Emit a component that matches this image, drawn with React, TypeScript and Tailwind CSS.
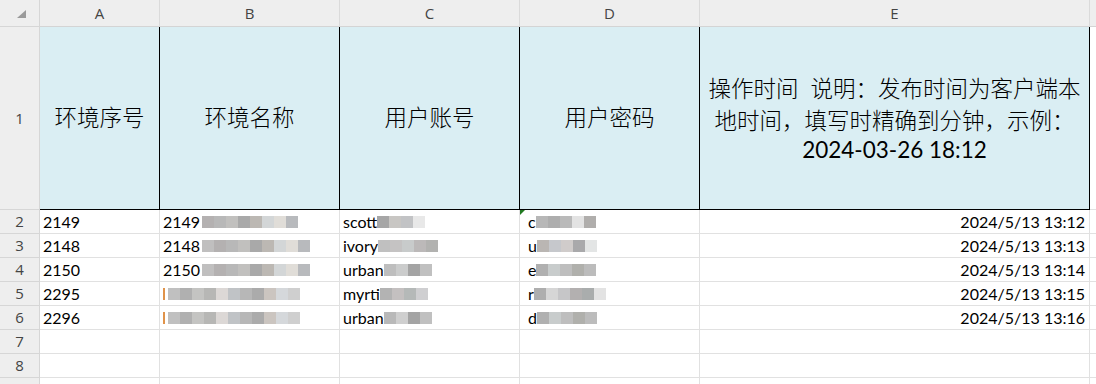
import React from "react"

const cols = ["A", "B", "C", "D", "E", ""]

type Row = {
  a: string
  b: string
  bTiles: string[]
  c: string
  cTiles: string[]
  d: string
  dTiles: string[]
  e: string
}

const tB1 = ["#b4b1b1", "#b8b8b8", "#c1c0be", "#a9a9a9", "#bcb8b3", "#d3d6d7", "#e0ddd8", "#b8babd"]
const tB2 = ["#c0c0c0", "#b0b0b0", "#c4c4c2", "#b7b7b5", "#dcd8d6", "#c0c3c6", "#b7b7b7", "#ababab", "#cbc5c0", "#d5d8db", "#cfcfcf"]

const rows: Row[] = [
  { a: "2149", b: "2149", bTiles: tB1, c: "scott", cTiles: ["#a6a6a6", "#c8c6c3", "#c2c3c5", "#e8e8e8"], d: "c", dTiles: ["#b7b7b7", "#adadad", "#bababa", "#e3e3e3", "#b0aeac"], e: "2024/5/13 13:12" },
  { a: "2148", b: "2148", bTiles: ["#c0bfbf", ...tB1], c: "ivory", cTiles: ["#c0c0c0", "#c5c3c3", "#c8cbcb", "#bcb9b9", "#b2b2b0"], d: "u", dTiles: ["#bab6b3", "#c6c8cc", "#d0cccb", "#a9a9ab", "#e3e5e5"], e: "2024/5/13 13:13" },
  { a: "2150", b: "2150", bTiles: ["#c0bfbf", ...tB1], c: "urban", cTiles: ["#bebebe", "#cbcccc", "#a4a4a4", "#c0c0c0"], d: "e", dTiles: ["#b0b0b0", "#c8cccc", "#bebebe", "#b0b0ac", "#bcbcbc"], e: "2024/5/13 13:14" },
  { a: "2295", b: "", bTiles: tB2, c: "myrti", cTiles: ["#b3b3b3", "#c4c0c0", "#b5b9b8", "#cfcfd1"], d: "r", dTiles: ["#aeaeae", "#d6d6d6", "#c6c6c8", "#b3b0b0", "#aaadad", "#e3e3e3"], e: "2024/5/13 13:15" },
  { a: "2296", b: "", bTiles: tB2, c: "urban", cTiles: ["#b9b9b9", "#cfcfcf", "#a4a4a4", "#c0c0c0"], d: "d", dTiles: ["#b0b0b0", "#c8cccc", "#bebebe", "#b0b0ac", "#bcbcbc"], e: "2024/5/13 13:16" },
]

function Tiles({ colors }: { colors: string[] }) {
  return (
    <span className="inline-flex h-[12px]">
      {colors.map((c, i) => (
        <span key={i} className="w-[12px] h-[12px]" style={{ backgroundColor: c }} />
      ))}
    </span>
  )
}

function RowNum({ n }: { n?: number }) {
  return (
    <div className="flex items-center justify-center bg-[#eeeeee] border-r border-b border-[#d6d6d6] text-[15px] text-[#444444]">
      {n}
    </div>
  )
}

export default function App() {
  const data = "[font-family:Lato,'Noto_Sans_CJK_SC',sans-serif] text-[16px] text-black"
  const cell = "flex items-center border-r border-b border-[#e1e1e1] overflow-hidden whitespace-nowrap"
  const head = "flex items-center justify-center bg-[#daeef3] border-r border-b border-black text-[22.5px] text-black [font-family:Lato,'Noto_Sans_CJK_SC',sans-serif]"

  return (
    <div className="w-[1096px] h-[384px] overflow-hidden bg-white [font-family:'Open_Sans',sans-serif]">
      <div className="grid grid-cols-[40px_120px_180px_180px_180px_390px_1fr] grid-rows-[27px_183px_repeat(8,24px)]">
        {/* column headers */}
        <div className="flex items-start justify-start pl-[17px] pt-[10px] bg-[#eeeeee] border-r border-b border-[#d6d6d6]">
          <svg width="9" height="8" viewBox="0 0 9 8">
            <polygon points="9,0 9,8 0,8" fill="#9a9a9a" />
          </svg>
        </div>
        {cols.map((c, i) => (
          <div
            key={i}
            className={`flex items-center justify-center bg-[#eeeeee] border-b border-[#d4d4d4] text-[15px] text-[#444444] ${i < 5 ? "border-r border-r-[#dadada]" : ""}`}
          >
            {c}
          </div>
        ))}

        {/* row 1 */}
        <RowNum n={1} />
        <div className={`${head} font-light`}>环境序号</div>
        <div className={`${head} font-light`}>环境名称</div>
        <div className={`${head} font-light`}>用户账号</div>
        <div className={`${head} font-light`}>用户密码</div>
        <div className={`${head} flex-col text-center`}>
          <span className="font-light leading-[32px]">
            操作时间<span className="inline-block w-[12px]" />说明：发布时间为客户端本
          </span>
          <span className="font-light leading-[32px]">地时间，填写时精确到分钟，示例：</span>
          <span className="leading-[26px]">2024-03-26 18:12</span>
        </div>
        <div className="border-b border-[#e1e1e1]" />

        {/* data rows */}
        {rows.map((r, i) => (
          <React.Fragment key={i}>
            <RowNum n={i + 2} />
            <div className={`${cell} ${data} pl-[3px]`}>{r.a}</div>
            <div className={`${cell} ${data} pl-[3px]`}>
              {r.b ? r.b : <span className="w-[2px] h-[12px] mr-[3px] bg-[#e0934a]" />}
              <span className={r.b ? "ml-[2px]" : ""}>
                <Tiles colors={r.bTiles} />
              </span>
            </div>
            <div className={`${cell} ${data} pl-[3px]`}>
              {r.c}
              <Tiles colors={r.cTiles} />
            </div>
            <div className={`${cell} ${data} pl-[8px] relative`}>
              {i === 0 && (
                <svg className="absolute left-0 top-0" width="5" height="5" viewBox="0 0 5 5">
                  <polygon points="0,0 5,0 0,5" fill="#217a21" />
                </svg>
              )}
              {r.d}
              <Tiles colors={r.dTiles} />
            </div>
            <div className={`${cell} ${data} justify-end pr-[4px]`}>{r.e}</div>
            <div className="border-b border-[#e1e1e1]" />
          </React.Fragment>
        ))}

        {[7, 8, 0].map((n) => (
          <React.Fragment key={n}>
            <RowNum n={n || undefined} />
            <div className={cell} />
            <div className={cell} />
            <div className={cell} />
            <div className={cell} />
            <div className={cell} />
            <div className="border-b border-[#e1e1e1]" />
          </React.Fragment>
        ))}
      </div>
    </div>
  )
}
